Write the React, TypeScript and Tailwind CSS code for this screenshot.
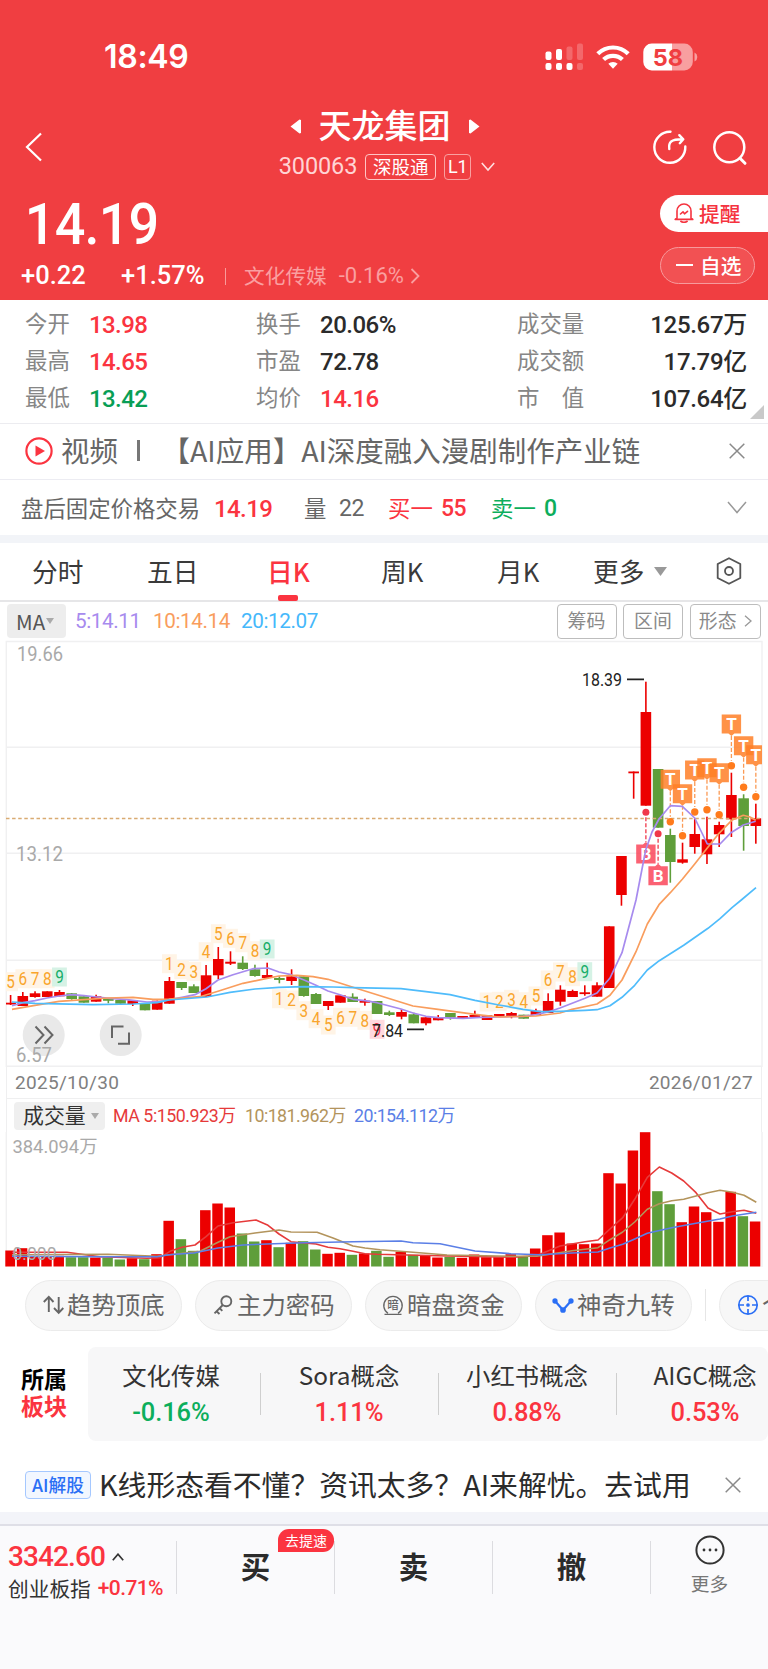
import type { ReactNode } from "react";
import clsx from "clsx";

const RED = "#ec0000";
const GREEN = "#5f9e3a";
const FIRST_X = 10.6;
const STEP = 12.217;

const cx = (i: number) => FIRST_X + i * STEP;

// [high, body top, body bottom, low, up]
const candles: [number, number, number, number, boolean][] = [
  [995, 1002.7, 1004.5, 1005, true],
  [992, 996, 1006, 1006, true],
  [991.3, 993.3, 997, 997.7, true],
  [991.3, 991.3, 997, 997, true],
  [990, 992, 996.3, 996.3, true],
  [993, 993.3, 999, 999.7, false],
  [996.3, 996.3, 1002.7, 1002.7, false],
  [994.7, 996.3, 1001.7, 1001.7, true],
  [999, 999, 1000.5, 1003.3, false],
  [1000, 1000, 1003.7, 1003.7, false],
  [1000.3, 1000.3, 1004, 1006, true],
  [1003.3, 1003.3, 1010.3, 1010.3, false],
  [1000.7, 1000.7, 1009.7, 1009.7, true],
  [977, 981, 1003.7, 1003.7, true],
  [982, 982, 988, 990, false],
  [984.3, 986.3, 993, 993, false],
  [965, 975.3, 996.7, 996.7, true],
  [947, 959, 975.3, 979, true],
  [951.3, 961.7, 963.7, 965, true],
  [956.3, 962.7, 969, 970, false],
  [964.7, 969.3, 976, 976.7, false],
  [962.7, 975, 978, 978, true],
  [976.3, 978, 980, 983.3, false],
  [969.3, 976.3, 981, 985, true],
  [976.3, 976.3, 996, 996.7, false],
  [993, 994, 1004, 1004, false],
  [1001, 1001, 1006, 1010, true],
  [995.3, 995.3, 1002.7, 1002.7, true],
  [993.3, 996.7, 1002, 1002, false],
  [998.7, 1000.7, 1002.7, 1005.7, true],
  [1001, 1001, 1014, 1014, false],
  [1010.7, 1012.3, 1015, 1016, false],
  [1009, 1012, 1016.7, 1019.3, true],
  [1012.7, 1014.3, 1023.3, 1023.3, false],
  [1017.3, 1017.3, 1023.3, 1025.3, true],
  [1015, 1017.3, 1020.3, 1020.3, true],
  [1013, 1013, 1017.7, 1019.7, false],
  [1016, 1016, 1018, 1018, true],
  [1010.7, 1015, 1017, 1017, true],
  [1015.3, 1015.3, 1020, 1020, true],
  [1014, 1014, 1016, 1016, true],
  [1012, 1013, 1016, 1018.3, true],
  [1014.7, 1014.7, 1018.7, 1018.7, false],
  [1008.7, 1010.7, 1015, 1015, true],
  [993.3, 1001, 1013, 1013, true],
  [985.3, 989.7, 1001.7, 1005.7, true],
  [989.7, 991, 997, 997, true],
  [985.3, 992.3, 993.5, 995.7, true],
  [982.3, 985.3, 996.7, 996.7, true],
  [926.3, 926.3, 988, 988, true],
  [856, 856, 895, 905.7, true],
  [771.5, 771.5, 773.3, 798.7, true],
  [681.7, 712, 805.7, 805.7, true],
  [769, 769, 827.7, 827.7, false],
  [828.7, 835, 862, 882.7, false],
  [842.7, 859.3, 862.7, 863.7, true],
  [818.3, 834, 847, 853.7, true],
  [816.7, 839.3, 854.3, 864, true],
  [821.7, 825, 834.3, 847, true],
  [772.7, 795, 819.3, 837, true],
  [794.3, 798.3, 826, 850.7, false],
  [803.7, 818.3, 826, 843.7, true],
];

const volumeHeights = [
  16, 18.3, 9.7, 9.5, 10.7, 9.3, 9.3, 9, 9, 7, 8.3, 7.3, 12.3, 45.7, 27.3, 15.7, 56.3, 63,
  59, 33, 25, 26.3, 19.3, 23.7, 25.3, 17, 12.7, 13.7, 11.7, 13, 15.7, 9.7, 14.7, 11.7, 11.3,
  9, 9.7, 8.7, 12, 9.3, 9.3, 12.3, 9.7, 18, 31.3, 34, 23, 22.3, 23, 93.3, 83, 116, 134.3,
  75.3, 62.3, 44.3, 60, 54.3, 44.7, 74.7, 50.3, 45,
];

const priceLines = [
  {
    color: "#a78bee",
    points:
      "12,1005.7 23,1002.7 35,1000.7 47,998 59,996 72,994.7 84,995.7 97,997 110,998.3 127,999.7 147,1002 160,1001.7 169,999.7 182,997.3 195,994.7 206,988.7 218,980 233,974.7 253,968.7 268,968 279,972 291,974.7 304,980 316,985.3 328,991 340,994.7 353,999.3 365,1000.7 377,1002.7 401,1009 413,1013 426,1016.3 438,1017.7 463,1018.3 480,1017.3 523,1016.3 536,1014.7 548,1012 560,1008 585,998.3 597,993 610,978 622,952.7 636,900 645.7,850 652,832 659,819 670.3,805.7 682.3,806.3 694.7,818 707.3,844 720,844 731,832.7 743.3,825 755.7,821.3",
  },
  {
    color: "#f99d5d",
    points:
      "12,1009.3 35,1005.3 59,1001.3 84,999.7 108,998 133,997.3 153,999.3 169,999 200,996.7 218,991.3 243,983.3 267,978.3 279,976 297,975.3 313,976.7 328,979.3 353,987.3 377,994.7 413,1006 438,1009.3 475,1014.3 499,1017 536,1016 560,1013 572,1009.3 597,1004 610,995.3 622,980 636,951.7 647.3,924 659,904.7 670.3,892.7 682.3,879.3 694.7,864 706.7,848.7 719,833.3 731.7,820.3 743.3,815.3 750,817 755.7,820.3",
  },
  {
    color: "#4fbcfb",
    points:
      "12,1002 35,1003.3 93,1004.7 133,1004 157,1002.7 169,1000 207,997 230,992.3 255,989 279,987.3 304,986.7 333,987 353,987.7 401,988.7 426,991.7 450,994.7 475,1000.3 499,1005 523,1009.3 540,1011.7 560,1011.3 585,1010.3 597,1009.7 610,1005.7 622,997.3 634.7,985.3 647.3,970 659.3,960.7 683.7,945.3 708,928.3 720,918.7 732.3,907.3 741.3,900 756,887.7",
  },
];

const volumeLines = [
  {
    color: "#e63a3a",
    points:
      "12,1252.3 67,1252.3 100,1256.7 147,1258.3 160,1257.7 170,1251.3 182,1247.3 195,1245 206,1236.7 218,1226 233,1222.7 256,1220 268,1225.3 279,1234 291,1241.7 304,1243 316,1244 328,1247.3 340,1248.7 353,1251.3 365,1253.7 377,1254.3 438,1255.7 513,1257.3 536,1255.7 548,1251 560,1246 585,1241.7 598,1240 610,1229 622.7,1217.7 634.7,1199.3 647.3,1177.3 659.3,1167 671.7,1173 683.7,1181 696,1192.7 708,1208 720,1214 732.3,1211.7 744,1210.3 756.3,1213.3",
  },
  {
    color: "#b3945c",
    points:
      "12,1254.7 108,1254.3 157,1256.3 200,1251.3 218,1242.3 230,1236.7 255,1233 279,1230 291,1232 317,1232.3 333,1238 353,1246 365,1248 380,1249.7 413,1252.3 447,1255 513,1256.3 537,1256.3 572,1250.7 598,1247.7 610,1239.7 622.7,1232 634.7,1222 647.3,1209.3 659.3,1203.7 671.7,1200.7 683.7,1199.3 696,1196 708,1192.7 720,1190.3 732.3,1192.3 744,1195.3 756.3,1202.3",
  },
  {
    color: "#5b7fe6",
    points:
      "12,1256.3 100,1256.7 157,1256.7 169,1254.7 194,1253 218,1248 243,1245 267,1244 304,1242.7 353,1241.7 401,1241 413,1242.7 440,1243.7 475,1251 511,1253.7 540,1254.7 572,1253 598,1252 610,1248 622.7,1244.3 634.7,1239 647.3,1233.3 671.7,1227.7 696,1223.3 720,1219 732.3,1216 756.3,1212.3",
  },
];

// [candle index, digit, center y]
const turns: [number, number, number][] = [
  [0, 5, 981.7], [1, 6, 978.7], [2, 7, 978.7], [3, 8, 978.7], [4, 9, 977],
  [13, 1, 963.7], [14, 2, 969.7], [15, 3, 971.3], [16, 4, 951.7], [17, 5, 933.7],
  [18, 6, 938.3], [19, 7, 942.7], [20, 8, 950.7], [21, 9, 949],
  [22, 1, 998.7], [23, 2, 1000], [24, 3, 1010.7], [25, 4, 1018.7], [26, 5, 1025],
  [27, 6, 1017.3], [28, 7, 1017.3], [29, 8, 1020.3], [30, 9, 1029.3],
  [39, 1, 1002], [40, 2, 1001.3], [41, 3, 999.3], [42, 4, 1001.7], [43, 5, 996],
  [44, 6, 980], [45, 7, 972], [46, 8, 976.7], [47, 9, 971.7],
];

// [candle index, box center y, dot y]
const sellMarks: [number, number, number][] = [
  [54, 779.3, 821.7], [55, 793.7, 835.7], [56, 770, 812], [57, 767.7, 809.7],
  [58, 772.7, 814.7], [59, 724, 765.7], [60, 745.7, 787.3], [61, 754.7, 796.7],
];
const buyMarks: [number, number, number][] = [
  [52, 854, 812.3],
  [53, 875.7, 833.7],
];

const digitColor = (i: number, n: number) => {
  if (n !== 9) return ["#fff4e6", "#f9a52c"];
  return i === 30 ? ["#ffd9de", "#f0384a"] : ["#d5f2e5", "#17ad68"];
};

const axisText = "fill-[#a9a9a9] font-['Roboto']";

const PriceChart = () => (
  <svg viewBox="0 640 768 427" className="block h-[427px] w-full">
    <g stroke="#f0f0f1" strokeWidth="1.4" fill="none">
      <path d="M6.3 641.5H762V1066.3H6.3Z" />
      <path d="M6 747.3H762M6 853.3H762M6 960.3H762" />
    </g>
    <text x="17" y="661" fontSize="19.5" textLength="46" lengthAdjust="spacingAndGlyphs" className={axisText}>19.66</text>
    <text x="16" y="861" fontSize="19.5" textLength="47" lengthAdjust="spacingAndGlyphs" className={axisText}>13.12</text>

    {turns.map(([i, n, y]) => {
      const [bg, fg] = digitColor(i, n);
      return (
        <g key={i}>
          <rect x={Math.max(cx(i) - 7.4, 6)} y={y - 9.5} width={i ? 14.8 : 12} height="19" fill={bg} />
          <text
            x={cx(i) - 4.3}
            y={y + 6.4}
            fontSize="18"
            fill={fg}
            textLength="8.6"
            lengthAdjust="spacingAndGlyphs"
            className="font-['Roboto']"
          >
            {n}
          </text>
        </g>
      );
    })}

    {candles.map(([high, top, bottom, low, up], i) => {
      const left = Math.max(cx(i) - 5.3, 6);
      return (
        <g key={i} fill={up ? RED : GREEN}>
          <rect x={left} y={top} width={cx(i) + 5.3 - left} height={Math.max(bottom - top, 1.8)} />
          <rect x={cx(i) - 0.8} y={high} width="1.6" height={low - high} />
        </g>
      );
    })}

    <path d="M6 818.5H762" stroke="#d9ab72" strokeWidth="1.4" strokeDasharray="3.5 2.6" />

    {sellMarks.map(([i, y, dot]) => (
      <g key={i}>
        <path d={`M${cx(i)} ${y + 12}V${dot - 5}`} stroke="#fb9a55" strokeWidth="1.3" strokeDasharray="4 2" />
        <path
          d={`M${cx(i) - 9.7} ${y - 9.5}H${Math.min(cx(i) + 9.7, 762)}V${y + 9.5}H${cx(i) + 3}L${cx(i)} ${y + 12}L${cx(i) - 3} ${y + 9.5}H${cx(i) - 9.7}Z`}
          fill="#ff7f27"
          fillOpacity="0.85"
        />
        <text x={cx(i)} y={y + 6} fontSize="17" textAnchor="middle" className="fill-white font-['Roboto'] font-bold">T</text>
        <circle cx={cx(i)} cy={dot} r="3.7" fill="#ff7b1c" />
      </g>
    ))}
    {buyMarks.map(([i, y, dot]) => (
      <g key={i}>
        <path d={`M${cx(i)} ${dot + 5}V${y - 12}`} stroke="#f0384a" strokeWidth="1.3" strokeDasharray="4 2" />
        <path
          d={`M${cx(i) - 9.7} ${y + 9.5}H${cx(i) + 9.7}V${y - 9.5}H${cx(i) + 3}L${cx(i)} ${y - 12}L${cx(i) - 3} ${y - 9.5}H${cx(i) - 9.7}Z`}
          fill="#fa3b50"
          fillOpacity="0.8"
        />
        <text x={cx(i)} y={y + 6} fontSize="17" textAnchor="middle" className="fill-white font-['Roboto'] font-bold">B</text>
        <circle cx={cx(i)} cy={dot} r="3.5" fill="#f0384a" />
      </g>
    ))}

    {priceLines.map((line) => (
      <polyline key={line.color} points={line.points} fill="none" stroke={line.color} strokeWidth="1.7" strokeLinejoin="round" />
    ))}

    <text x="582" y="686" fontSize="18.5" textLength="40" lengthAdjust="spacingAndGlyphs" className="fill-[#222] font-['Roboto']">18.39</text>
    <path d="M627 679.4H644M407 1029.4H424" stroke="#222" strokeWidth="1.7" />
    <text x="372" y="1036.5" fontSize="18.5" textLength="31" lengthAdjust="spacingAndGlyphs" className="fill-[#222] font-['Roboto']">7.84</text>

    <circle cx="43.7" cy="1035" r="21" fill="#e9e9e9" />
    <circle cx="120.7" cy="1035" r="21" fill="#e9e9e9" />
    <path d="M35.5 1026.5L43.5 1035L35.5 1043.5M44.5 1026.5L52.5 1035L44.5 1043.5" fill="none" stroke="#666" strokeWidth="2" />
    <path d="M123.5 1026.5H112V1038M118 1043.7H129V1032.5" fill="none" stroke="#666" strokeWidth="2" />
    <text x="16" y="1062" fontSize="19.5" textLength="36" lengthAdjust="spacingAndGlyphs" className={axisText}>6.57</text>
  </svg>
);

const VolumeChart = () => (
  <svg viewBox="0 1132 768 136" className="block h-[136px] w-full">
    <path d="M6.3 1132V1267M762 1132V1267" stroke="#f0f0f1" strokeWidth="1.4" />
    {volumeHeights.map((h, i) => {
      const left = Math.max(cx(i) - 6, 5.3);
      return (
        <rect key={i} x={left} y={1266.5 - h} width={cx(i) + 4.5 - left} height={h} fill={candles[i][4] ? RED : GREEN} />
      );
    })}
    {volumeLines.map((line) => (
      <polyline key={line.color} points={line.points} fill="none" stroke={line.color} strokeWidth="1.6" strokeLinejoin="round" />
    ))}
    <text
      x="12.5"
      y="1152.5"
      fontSize="18.5"
      textLength="85"
      lengthAdjust="spacingAndGlyphs"
      className="fill-[#a9a9a9] font-['Roboto','Noto_Sans_CJK_SC']"
    >
      384.094万
    </text>
    <text x="12.5" y="1260" fontSize="19" textLength="44" lengthAdjust="spacingAndGlyphs" className={axisText}>0.000</text>
  </svg>
);

const Num = ({ className, children }: { className?: string; children: ReactNode }) => (
  <span className={clsx("font-['Roboto','Noto_Sans_CJK_SC',sans-serif]", className)}>{children}</span>
);

const StatusBar = () => (
  <div className="flex h-[114px] items-center pl-[104px] pr-[69px]">
    <span className="font-['Inter'] text-[32px] leading-none font-semibold tracking-[-0.3px]">18:49</span>
    <svg viewBox="0 0 154 28" className="ml-auto h-7 w-[154px]">
      <g fill="#fff">
        <rect x="0.5" y="8.5" width="6" height="8.5" rx="2" />
        <rect x="11" y="6" width="6" height="11" rx="2" />
        <rect x="0.5" y="20" width="6" height="7" rx="2" />
        <rect x="11" y="20" width="6" height="7" rx="2" />
        <rect x="21.5" y="20" width="6" height="7" rx="2" />
        <g opacity="0.22">
          <rect x="21.5" y="3.5" width="6" height="13.5" rx="2" />
          <rect x="32" y="0.5" width="6" height="16.5" rx="2" />
          <rect x="32" y="20" width="6" height="7" rx="2" />
        </g>
        <path d="M68 25.8L63.3 20.8A6.8 6.8 0 0 1 72.7 20.8Z" />
      </g>
      <g fill="none" stroke="#fff" strokeWidth="4.2">
        <path d="M52.8 10.8A21.5 21.5 0 0 1 83.2 10.8" />
        <path d="M58.6 16.6A13.5 13.5 0 0 1 77.4 16.6" />
      </g>
      <path d="M127 0.5V27.5H107A8.5 8.5 0 0 1 98.3 19V9A8.5 8.5 0 0 1 107 0.5Z" fill="#fff" />
      <path d="M127 0.5H139A8.5 8.5 0 0 1 147.8 9V19A8.5 8.5 0 0 1 139 27.5H127Z" fill="#fff" fillOpacity="0.5" />
      <path d="M149.5 9.5A5 5 0 0 1 149.5 18.5Z" fill="#fff" fillOpacity="0.5" />
      <text x="123" y="22.5" fontSize="23.5" textAnchor="middle" className="fill-[#f03e41] font-['Inter'] font-bold">58</text>
    </svg>
  </div>
);

const Header = () => (
  <header className="h-[300px] bg-[#f03e41] text-white">
    <StatusBar />
    <div className="flex h-[78px] items-start justify-between pl-[25px] pr-[20px]">
      <svg viewBox="0 0 18 30" className="mt-[18px] h-[30px] w-[92px] flex-none" preserveAspectRatio="xMinYMid meet">
        <path d="M16 1.5L2 15L16 28.5" fill="none" stroke="#fff" strokeWidth="2.2" />
      </svg>
      <div className="flex flex-col items-center">
        <div className="flex h-[25px] items-center gap-[18px]">
          <svg viewBox="0 0 11 15" className="h-[15px] w-[11px]"><path d="M11 1V14L9.5 14.5L0.5 7.5L9.5 0.5Z" fill="#fff" /></svg>
          <span className="relative -top-[2px] text-[33px] leading-none font-medium">天龙集团</span>
          <svg viewBox="0 0 11 15" className="h-[15px] w-[11px]"><path d="M0 1V14L1.5 14.5L10.5 7.5L1.5 0.5Z" fill="#fff" /></svg>
        </div>
        <div className="mt-[14px] ml-[5px] flex h-[27px] items-center">
          <Num className="mr-2 text-[23.5px] tracking-[-0.1px] text-[#ffd4d4]">300063</Num>
          <span className="mr-2 flex h-[26px] w-[71px] items-center justify-center rounded border border-[#ffc4c4] pb-px text-[18.5px] leading-none">深股通</span>
          <span className="mr-[10px] flex h-[26px] w-[27px] items-center justify-center rounded border border-[#f9a0a0] text-[18px] leading-none">
            <Num>L1</Num>
          </span>
          <svg viewBox="0 0 14 10" className="h-[10px] w-[14px]"><path d="M0.8 1L7 8L13.2 1" fill="none" stroke="#ffdede" strokeWidth="1.6" /></svg>
        </div>
      </div>
      <div className="mt-4 flex gap-[24px]">
        <svg viewBox="0 0 36 36" className="h-9 w-9" fill="none" stroke="#fff" strokeWidth="2.4" strokeLinecap="round" strokeLinejoin="round">
          <path d="M18.5 1.8A15.5 15.5 0 1 0 33.3 16.5" />
          <path d="M17.3 19C16.3 12 19 9.3 30.5 9.3M27.3 5.2L31.3 9.3L27.8 13.2" />
        </svg>
        <svg viewBox="0 0 36 36" className="h-9 w-9" fill="none" stroke="#fff" strokeWidth="2.5" strokeLinecap="round">
          <circle cx="17.3" cy="17.2" r="15" />
          <path d="M28 28.3L33 33.3" strokeWidth="3" />
        </svg>
      </div>
    </div>
    <div className="flex justify-between">
      <div className="pl-[23px]">
        <Num className="block w-fit origin-left scale-x-[0.93] pt-[3px] pl-[2px] text-[58px] leading-[58px] font-medium tracking-[-0.9px]">14.19</Num>
        <div className="-ml-[2px] mt-[9px] flex h-7 items-center">
          <Num className="w-[100px] text-[25.5px] font-medium">+0.22</Num>
          <Num className="w-[104px] text-[25.5px] font-medium">+1.57%</Num>
          <span className="mr-[18px] h-[17px] w-px bg-[#f99a9a]" />
          <span className="relative -top-px text-[20.7px] text-[#fa9fa0]">文化传媒</span>
          <Num className="ml-[12px] text-[22px] text-[#fa9fa0]">-0.16%</Num>
          <svg viewBox="0 0 10 16" className="ml-[6px] h-4 w-[10px]"><path d="M1.5 1L8.5 8L1.5 15" fill="none" stroke="#fa9fa0" strokeWidth="1.8" /></svg>
        </div>
      </div>
      <div className="pt-[3px]">
        <div className="flex h-[37px] w-[108px] items-center rounded-l-full bg-white pl-[14px] pb-px text-[20.7px] font-medium text-[#f5333f]">
          <svg viewBox="0 0 20 20" className="mr-[5px] h-5 w-5" fill="none" stroke="#f5333f" strokeWidth="1.6" strokeLinecap="round" strokeLinejoin="round">
            <path d="M3 15V8A7 7 0 0 1 17 8V15L18.8 16.4H1.2Z" />
            <path d="M6.5 11L9 8.8L10.5 10.8L13.5 8.3M6.8 18.3Q10 20.3 13.2 18.3" />
          </svg>
          提醒
        </div>
        <div className="mt-[15px] flex h-[37px] w-[95px] items-center rounded-full border border-[#f79a9c] bg-[#f25153] pl-[15px] pb-px text-[20.7px] font-medium">
          <span className="mr-[7px] h-[2px] w-[17px] bg-white" />
          自选
        </div>
      </div>
    </div>
  </header>
);

const up = "text-[#fb3440]";
const down = "text-[#089e55]";

const stats = [
  [["今开", "13.98", up], ["换手", "20.06%", ""], ["成交量", "125.67万", ""]],
  [["最高", "14.65", up], ["市盈", "72.78", ""], ["成交额", "17.79亿", ""]],
  [["最低", "13.42", down], ["均价", "14.16", up], ["市　值", "107.64亿", ""]],
];

const Stats = () => (
  <section className="relative h-[124px] border-b border-[#ececf0] pt-[6px]">
    {stats.map((row) => (
      <div key={row[0][0]} className="flex h-[37px] items-center pl-[25px] pr-[21px] text-[22.4px] text-[#868686]">
        <span className="w-[64px] pb-1">{row[0][0]}</span>
        <Num className={clsx("w-[167px] text-[24px] font-medium tracking-[-0.6px]", row[0][2])}>{row[0][1]}</Num>
        <span className="w-[64px] pb-1">{row[1][0]}</span>
        <Num className={clsx("w-[197px] text-[24px] font-medium tracking-[-0.5px]", row[1][2] || "text-[#2b2b2b]")}>{row[1][1]}</Num>
        <span className="pb-1">{row[2][0]}</span>
        <Num className="ml-auto text-[24px] font-medium tracking-[-0.3px] text-[#2b2b2b]">{row[2][1]}</Num>
      </div>
    ))}
    <svg viewBox="0 0 14 14" className="absolute right-1 bottom-[4px] h-[14px] w-[14px]"><path d="M14 0V14H0Z" fill="#c9c9c9" /></svg>
  </section>
);

const Close = ({ className }: { className?: string }) => (
  <svg viewBox="0 0 16 16" className={clsx("h-4 w-4", className)}>
    <path d="M0.7 0.7L15.3 15.3M15.3 0.7L0.7 15.3" stroke="#8a8a8a" strokeWidth="1.5" />
  </svg>
);

const VideoRow = () => (
  <div className="flex h-[56px] items-center border-b border-[#ececf2] pl-[25px] pr-[23px] pb-[2px] text-[28.5px] text-[#666]">
    <svg viewBox="0 0 28 28" className="mr-[8px] h-7 w-7 flex-none">
      <circle cx="14" cy="14" r="12.6" fill="none" stroke="#fb3440" strokeWidth="2.2" />
      <path d="M10.5 8.5L20 14L10.5 19.5Z" fill="#fb3440" />
    </svg>
    <span className="whitespace-nowrap">视频</span>
    <span className="ml-[19px] h-[21px] w-[2.5px] bg-[#777]" />
    <span className="ml-[22px] whitespace-nowrap">【AI应用】AI深度融入漫剧制作产业链</span>
    <Close className="ml-auto" />
  </div>
);

const FixedPriceRow = () => (
  <div className="flex h-[55px] items-center pl-[21px] pr-[21px] text-[22.4px] text-[#666]">
    <span className="w-[193px]">盘后固定价格交易</span>
    <Num className="w-[90px] pt-[2px] text-[24px] font-medium tracking-[-0.6px] text-[#fb3440]">14.19</Num>
    <span className="w-[35px]">量</span>
    <Num className="w-[49px] pt-[2px] text-[23px] tracking-[-0.5px]">22</Num>
    <span className="w-[53px] text-[#fb3440]">买一</span>
    <Num className="w-[50px] pt-[2px] text-[23px] font-medium tracking-[-0.5px] text-[#fb3440]">55</Num>
    <span className="w-[53px] text-[#0cae5c]">卖一</span>
    <Num className="pt-[2px] text-[23px] font-medium text-[#0cae5c]">0</Num>
    <svg viewBox="0 0 20 13" className="ml-auto h-[13px] w-5"><path d="M1 1L10 11.5L19 1" fill="none" stroke="#999" strokeWidth="1.5" /></svg>
  </div>
);

const Tabs = () => (
  <nav className="flex h-[59px] items-center border-b-2 border-[#e6e6e8] pl-[32px] pb-[2px] text-[25.7px] text-[#3a3a3a]">
    <span className="w-[115px]">分时</span>
    <span className="w-[120px]">五日</span>
    <span className="relative w-[114px] font-medium text-[#fb3440]">
      日K
      <i className="absolute -bottom-[18px] left-[11px] h-[6px] w-5 rounded-[2px] bg-[#fb3440]" />
    </span>
    <span className="w-[116px]">周K</span>
    <span className="w-[96px]">月K</span>
    <span>更多</span>
    <svg viewBox="0 0 13 9" className="mt-[2px] ml-[10px] h-[9px] w-[13px]"><path d="M0 0H13L6.5 9Z" fill="#999" /></svg>
    <svg viewBox="0 0 26 28" className="ml-[49px] h-7 w-[26px]" fill="none" stroke="#555" strokeWidth="1.8" strokeLinejoin="round">
      <path d="M13 1.2L24.3 7V21L13 26.8L1.7 21V7Z" />
      <circle cx="13" cy="14" r="4" />
    </svg>
  </nav>
);

const MaRow = () => (
  <div className="flex h-[38px] items-center pl-[7px] pr-[7px]">
    <span className="mr-[9px] flex h-[34px] w-[59px] items-center rounded bg-[#ededed] pl-[9px] text-[20.5px] text-[#555]">
      MA
      <svg viewBox="0 0 8 6" className="ml-px h-[6px] w-2"><path d="M0 0H8L4 6Z" fill="#aaa" /></svg>
    </span>
    <Num className="w-[78px] text-[20.7px] tracking-[-0.4px] text-[#a78bee]">5:14.11</Num>
    <Num className="w-[88px] text-[20.7px] tracking-[-0.4px] text-[#f99d5d]">10:14.14</Num>
    <Num className="text-[20.7px] tracking-[-0.4px] text-[#45b8fb]">20:12.07</Num>
    <div className="ml-auto flex gap-[6.5px] text-[18.9px] text-[#8a8a8a]">
      <span className="flex h-[35px] w-[60px] items-center justify-center rounded border border-[#bdbdbd] pb-px">筹码</span>
      <span className="flex h-[35px] w-[60px] items-center justify-center rounded border border-[#bdbdbd] pb-px">区间</span>
      <span className="flex h-[35px] w-[71.5px] items-center justify-center gap-[7px] rounded border border-[#bdbdbd] pb-px">
        形态
        <svg viewBox="0 0 8 12" className="h-3 w-2"><path d="M1 0.7L7 6L1 11.3" fill="none" stroke="#999" strokeWidth="1.3" /></svg>
      </span>
    </div>
  </div>
);

const VolumeHead = () => (
  <div className="mx-[6px] flex h-[34px] items-center border-x border-t border-[#efeff0] pl-[7px]">
    <span className="mr-2 flex h-7 w-[91px] items-center rounded bg-[#efefef] pl-[9px] pb-[2px] text-[20.9px] text-[#333]">
      成交量
      <svg viewBox="0 0 8 6" className="mt-[2px] ml-[5px] h-[6px] w-2"><path d="M0 0H8L4 6Z" fill="#aaa" /></svg>
    </span>
    <Num className="w-[132px] text-[17.8px] whitespace-nowrap tracking-[-0.45px] text-[#e63a3a]">MA 5:150.923万</Num>
    <Num className="w-[109px] text-[17.8px] whitespace-nowrap tracking-[-0.55px] text-[#b3945c]">10:181.962万</Num>
    <Num className="text-[17.8px] whitespace-nowrap tracking-[-0.55px] text-[#5b7fe6]">20:154.112万</Num>
  </div>
);

const tools = [
  {
    name: "趋势顶底",
    icon: <path d="M0.8 7L5.8 1.8L10.5 7M5.8 2V17M11 13L15.7 17.8L20.3 13M15.7 17.5V2" strokeWidth="1.9" />,
  },
  {
    name: "主力密码",
    icon: (
      <>
        <circle cx="13.3" cy="6.3" r="5" strokeWidth="1.9" />
        <path d="M9.8 10L1.5 18.3M3.2 16L6.5 19M6.5 13L9.3 15.8" strokeWidth="1.9" />
      </>
    ),
  },
  {
    name: "暗盘资金",
    icon: (
      <>
        <path d="M5 18.3A9.2 9.2 0 1 1 15 18.3M1.5 19.3H18.5" strokeWidth="1.3" />
        <text x="10" y="14.2" fontSize="11.5" fontWeight="500" textAnchor="middle" fill="#666" stroke="none">暗</text>
      </>
    ),
  },
  {
    name: "神奇九转",
    icon: (
      <g stroke="#2b6ff5" fill="#2b6ff5">
        <path d="M2 6L10 15L18 6" fill="none" strokeWidth="2.2" />
        <circle cx="2" cy="6" r="1.8" />
        <circle cx="10" cy="15" r="2" />
        <circle cx="18" cy="6" r="1.8" />
      </g>
    ),
  },
];

const ToolIcon = ({ children }: { children: ReactNode }) => (
  <svg viewBox="0 0 20 20" className="mr-[4px] h-5 w-5 flex-none overflow-visible" fill="none" stroke="#666" strokeWidth="1.7">
    {children}
  </svg>
);

const Tools = () => (
  <div className="mb-[5px] flex h-[74px] items-center gap-[13px] overflow-hidden pl-[25px] text-[24.4px] text-[#666]">
    {tools.map((tool) => (
      <span key={tool.name} className="flex h-[51px] w-[157px] flex-none items-center rounded-full border border-[#ebebeb] bg-[#f7f7f7] pl-[17px] whitespace-nowrap">
        <ToolIcon>{tool.icon}</ToolIcon>
        <span className="pb-[2px]">{tool.name}</span>
      </span>
    ))}
    <span className="h-8 w-px flex-none bg-[#e6e6e6]" />
    <span className="flex h-[51px] w-[157px] flex-none items-center rounded-full border border-[#ebebeb] bg-[#f7f7f7] pl-[18px] whitespace-nowrap">
      <ToolIcon>
        <g stroke="#2b6ff5">
          <circle cx="10" cy="10" r="9.2" />
          <path d="M10 1V6M10 14V19M1 10H6M14 10H19" />
          <circle cx="10" cy="10" r="1" fill="#2b6ff5" />
        </g>
      </ToolIcon>
      <span className="pb-[2px]">个</span>
    </span>
  </div>
);

const sectors = [
  ["文化传媒", "-0.16%", "text-[#0cae5c]"],
  ["Sora概念", "1.11%", up],
  ["小红书概念", "0.88%", up],
  ["AIGC概念", "0.53%", up],
];

const Sectors = () => (
  <section className="flex h-[94px] items-center overflow-hidden pl-[21px]">
    <div className="w-[67px] flex-none pb-[4px] text-[23px] leading-[27px] font-bold">
      <p className="text-black">所属</p>
      <p className="text-[#fb3440]">板块</p>
    </div>
    <div className="flex h-full w-[680px] flex-none items-center overflow-hidden rounded-lg bg-[#f7f7f8]">
      {sectors.map(([name, change, color], i) => (
        <div key={name} className={clsx("flex flex-none flex-col items-center", i === 0 ? "w-[172px] pr-[6px]" : "relative w-[178px]")}>
          {i > 0 && <i className="absolute top-[16px] left-0 h-[42px] w-px bg-[#cfcfcf]" />}
          <span className="text-[24.4px] leading-[36px] text-[#333]">{name}</span>
          <Num className={clsx("pt-px text-[25.5px] leading-[37px] font-medium tracking-[-0.1px]", color)}>{change}</Num>
        </div>
      ))}
    </div>
  </section>
);

const AiRow = () => (
  <div className="flex h-[71px] items-center pt-4 pl-[25px] pr-[27px]">
    <span className="mr-[8px] flex h-7 w-[66px] flex-none items-center justify-center rounded border border-[#a5c8ff] bg-[#f2f7ff] text-[17.7px] font-medium text-[#2b6ff5]">
      AI解股
    </span>
    <span className="text-[28.8px] whitespace-nowrap text-[#2b2b2b]">K线形态看不懂？资讯太多？AI来解忧。去试用</span>
    <Close className="ml-auto flex-none" />
  </div>
);

const BottomBar = () => (
  <footer className="flex h-[145px] items-start border-t-2 border-[#dfdfe7] bg-[#fafafc] pt-[15px]">
    <div className="h-[53px] w-[176px] pl-2">
      <div className="flex h-[32px] items-center">
        <Num className="w-[95px] text-[28px] font-medium tracking-[-0.9px] text-[#fb3440]">3342.60</Num>
        <svg viewBox="0 0 12 8" className="ml-[9px] h-2 w-3"><path d="M0.8 7.2L6 1.2L11.2 7.2" fill="none" stroke="#333" strokeWidth="1.7" /></svg>
      </div>
      <div className="flex h-[30px] items-center text-[20.7px] whitespace-nowrap text-[#333]">
        创业板指
        <Num className="ml-[7px] text-[21px] font-medium tracking-[-0.6px] text-[#fb3440]">+0.71%</Num>
      </div>
    </div>
    {["买", "卖", "撤"].map((label) => (
      <div key={label} className="relative flex h-[53px] w-[158px] items-center justify-center border-l border-[#dcdce0] pb-[4px] text-[29.5px] font-bold text-[#2b2b2b]">
        {label}
        {label === "买" && (
          <span className="absolute -top-[12px] left-[101px] flex h-[23px] w-[56px] items-center justify-center rounded-[11px] rounded-bl-none bg-[#fb3440] pb-px text-[14px] font-normal text-white">
            去提速
          </span>
        )}
      </div>
    ))}
    <div className="flex h-[53px] flex-1 flex-col items-center border-l border-[#dcdce0] text-[18.7px] text-[#777]">
      <svg viewBox="0 0 30 30" className="-mt-[6px] h-[30px] w-[30px] flex-none">
        <circle cx="15" cy="15" r="13.6" fill="none" stroke="#333" strokeWidth="2" />
        <g fill="#333">
          <circle cx="9" cy="15" r="1.4" />
          <circle cx="15" cy="15" r="1.4" />
          <circle cx="21" cy="15" r="1.4" />
        </g>
      </svg>
      <span className="mt-[5px] leading-[26px]">更多</span>
    </div>
  </footer>
);

const App = () => (
  <main className="h-[1669px] w-[768px] overflow-hidden bg-white font-['Noto_Sans_CJK_SC',sans-serif] leading-none">
    <Header />
    <Stats />
    <VideoRow />
    <FixedPriceRow />
    <div className="h-2 bg-[#f2f4f8]" />
    <Tabs />
    <MaRow />
    <PriceChart />
    <div className="mx-[6px] flex h-[31px] items-center justify-between border-x border-[#efeff0] px-2 text-[19px] text-[#808080]">
      <Num className="tracking-[0.3px]">2025/10/30</Num>
      <Num className="tracking-[0.3px]">2026/01/27</Num>
    </div>
    <VolumeHead />
    <VolumeChart />
    <Tools />
    <Sectors />
    <AiRow />
    <div className="h-3 bg-[#f3f4f9]" />
    <BottomBar />
  </main>
);

export default App;
